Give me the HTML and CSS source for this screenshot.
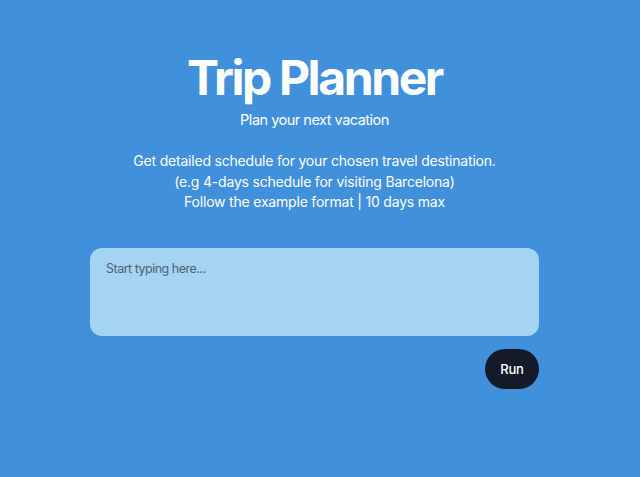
FILE: index.html
```html
<!DOCTYPE html>
<html lang="en">
<head>
<meta charset="utf-8">
<title>Trip Planner</title>
<link rel="stylesheet" href="styles.css">
</head>
<body>
<main class="page">
  <h1 class="title">Trip Planner</h1>
  <p class="subtitle">Plan your next vacation</p>
  <p class="intro">Get detailed schedule for your chosen travel destination.<br>(e.g 4-days schedule for visiting Barcelona)<br>Follow the example format | 10 days max</p>
  <form class="form">
    <textarea class="input" placeholder="Start typing here..."></textarea>
    <div class="actions">
      <button type="button" class="run">Run</button>
    </div>
  </form>
</main>
</body>
</html>
```
FILE: styles.css
```css
html, body {
  margin: 0;
  padding: 0;
}
body {
  background: #4190db;
  font-family: Inter, "Noto Sans", sans-serif;
  color: #ffffff;
  min-height: 477px;
  padding-right: 11px;
  box-sizing: border-box;
}
.page {
  max-width: 449px;
  margin: 0 auto;
  padding-top: 54px;
  display: flex;
  flex-direction: column;
  align-items: center;
  text-align: center;
}
.title {
  margin: 0;
  font-size: 48px;
  line-height: 48px;
  font-weight: 700;
  letter-spacing: -0.05em;
}
.subtitle {
  margin: 6px 0 0;
  font-size: 14.5px;
  line-height: 24px;
  letter-spacing: -0.5px;
}
.intro {
  margin: 19px 0 0;
  font-size: 14px;
  line-height: 20.5px;
  letter-spacing: -0.2px;
  white-space: nowrap;
}
.form {
  width: 100%;
  margin-top: 35px;
  display: flex;
  flex-direction: column;
  gap: 13px;
}
.input {
  display: block;
  width: 100%;
  height: 88px;
  box-sizing: border-box;
  border: none;
  border-radius: 12px;
  background: #a5d3f2;
  padding: 11px 16px;
  font-family: Inter, "Noto Sans", sans-serif;
  font-size: 12.5px;
  line-height: 20px;
  letter-spacing: -0.5px;
  color: #1f2937;
  resize: none;
  outline: none;
}
.input::placeholder {
  color: #4f6273;
}
.actions {
  display: flex;
  justify-content: flex-end;
}
.run {
  width: 54px;
  height: 40px;
  padding: 0;
  border: none;
  border-radius: 20px;
  background: #151a28;
  color: #ffffff;
  font-family: Inter, "Noto Sans", sans-serif;
  font-size: 13px;
  font-weight: 500;
  letter-spacing: -0.2px;
  cursor: pointer;
}
```
